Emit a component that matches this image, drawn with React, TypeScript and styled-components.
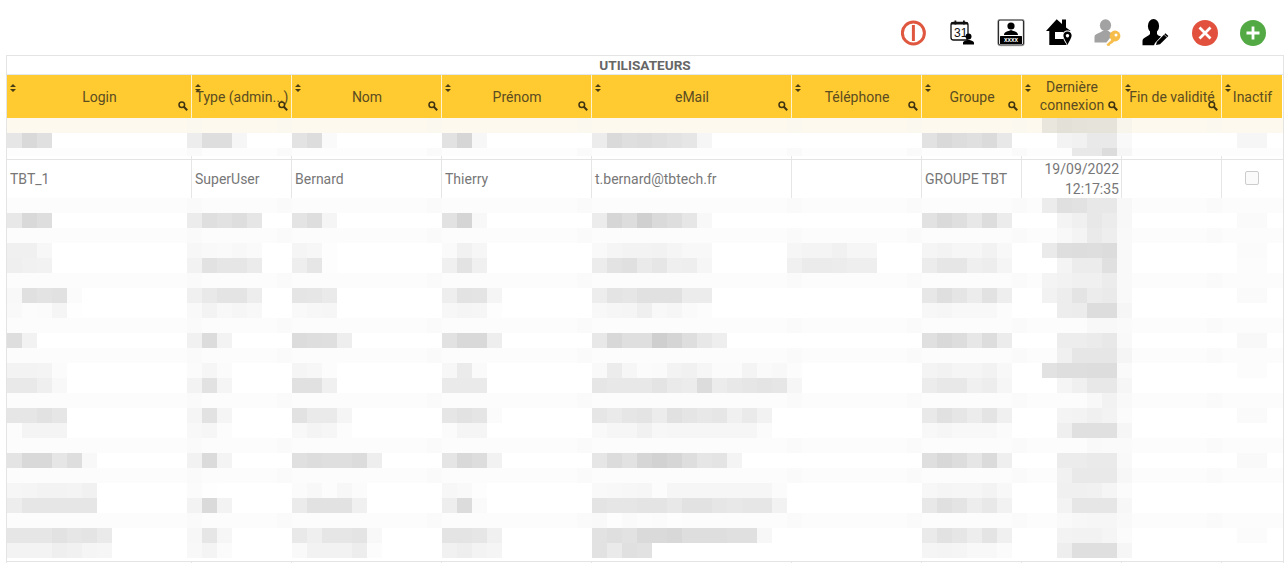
import { createGlobalStyle, styled } from "styled-components";

const COLUMNS = "185px 100px 150px 150px 200px 130px 100px 100px 100px 60px";

const GlobalStyle = createGlobalStyle`
  html, body {
    margin: 0;
    height: 563px;
    overflow: hidden;
    background: #fff;
    font-family: Roboto, "Liberation Sans", sans-serif;
  }
`;

const Toolbar = styled.div`
  display: flex;
  justify-content: flex-end;
  height: 55px;
  padding: 19px 9px 0 0;
  box-sizing: border-box;
`;

const ToolButton = styled.div`
  width: 48.3px;
  height: 28px;
  display: flex;
  justify-content: center;
`;

const Panel = styled.div`
  margin-left: 6px;
  width: 1276px;
  border: 1px solid #e4e4e4;
`;

const Title = styled.div`
  height: 18px;
  line-height: 19px;
  text-align: center;
  font-size: 13.6px;
  font-weight: 700;
  color: #666;
  border-bottom: 1px solid #e3e8ee;
`;

const Grid = styled.div`
  display: grid;
  grid-template-columns: ${COLUMNS};
`;

const HeadCell = styled.div`
  position: relative;
  height: 43px;
  box-sizing: border-box;
  padding-left: 1px;
  display: flex;
  align-items: center;
  justify-content: center;
  text-align: center;
  background: #ffcb30;
  border-right: 1px solid #fff3cf;
  color: #5b4c22;
  font-size: 14px;
  line-height: 18px;
  white-space: nowrap;

  &:last-child {
    border-right: 0;
  }
`;

const TwoLines = styled.span`
  padding-bottom: 2px;
`;

const SortMark = styled.svg`
  position: absolute;
  top: 9px;
  left: 3px;
  width: 6px;
  height: 8px;
`;

const SearchMark = styled.svg`
  position: absolute;
  right: 3px;
  bottom: 7px;
  width: 10px;
  height: 10px;
`;

const BodyCell = styled.div<{ $align?: string }>`
  height: 38px;
  display: flex;
  align-items: center;
  justify-content: ${(p) => p.$align ?? "flex-start"};
  padding: 0 ${(p) => (p.$align === "flex-end" ? "2px" : "3px")} 0 3px;
  box-sizing: border-box;
  overflow: hidden;
  border-right: 1px solid #e6e6e6;
  color: #777;
  font-size: 14px;
  line-height: 20px;
  text-align: ${(p) => (p.$align === "flex-end" ? "right" : "left")};

  &:last-child {
    border-right: 0;
  }
`;

const Tick = styled.div`
  height: 3px;
  border-right: 1px solid #e6e6e6;

  &:last-child {
    border-right: 0;
  }
`;

const RowLine = styled.div`
  height: 1px;
  background: #e4e4e4;
`;

const Check = styled.div`
  width: 12px;
  height: 12px;
  margin: -2px auto 0;
  border: 1px solid #ccc;
  border-radius: 2px;
  background: #fafafa;
`;

const MosaicLine = styled.div<{ $bg: string; $h: number }>`
  display: grid;
  grid-template-columns: repeat(85, 15px);
  height: ${(p) => p.$h}px;
  background: ${(p) => p.$bg};
`;

const Tile = styled.div`
  grid-row: 1;
  min-width: 0;
`;

type Run = [number, string];
type Line = { band?: boolean; runs: Run[] };

// column edges show through the blur on the pale bands
const EDGES = [12, 18, 28, 38, 52, 60, 67, 74, 80];

const upperLines: { h: number; bg: string; warm?: boolean; runs: Run[] }[] = [
  { h: 15, bg: "#fdf9ef", warm: true, runs: [[12, "fb"], [18, "fb"], [28, "fb"], [38, "fb"], [52, "fb"], [60, "fb"], [67, "fb"], [69, "e9e3e5e6e6"], [74, "f8"], [80, "fb"]] },
  { h: 15, bg: "#fff", runs: [[0, "e6d9e0"], [12, "eddedef6"], [19, "e3ddfa"], [29, "e2d6f7"], [39, "ecdadfdde0e3e6f6"], [61, "e2d9dde0dbe8"], [70, "f3f1e9e9f9"], [82, "f6f6"]] },
  { h: 8, bg: "#fdfdfd", runs: [[12, "fa"], [18, "fa"], [28, "fa"], [38, "fa"], [52, "fa"], [60, "fa"], [67, "fa"], [71, "e8e8dcf6"]] },
];

const lowerLines: Line[] = [
  { band: true, runs: [[69, "ece0e2e8e8f8"]] },
  { runs: [[0, "e8d9de"], [12, "ecdfe2dee6"], [19, "e4def5"], [29, "e2d5f8"], [39, "ecd6ddd0dadee6f8"], [61, "e2dadfe8ddec"], [70, "f4f0e8ecf8"], [82, "fafa"]] },
  { band: true, runs: [[70, "f8f4eaeef9"]] },
  { runs: [[0, "f0f0f7"], [12, "f7f9faf8fa"], [19, "f5f7fd"], [29, "faf1f6"], [39, "f9f5f3f3f2f5f8f8"], [52, "f6f4f4f1f6f6"], [61, "f5f3f6f6f2f8"], [69, "eadedddedcf9"], [82, "fbfb"]] },
  { runs: [[0, "eff1f2"], [12, "f2e2e6e6eb"], [19, "eee6fd"], [29, "f0e3f0"], [39, "ece3e0eae6efeef6"], [52, "f0ebebeceeee"], [61, "ece6e6efedf5"], [70, "f4ecece0f9"], [82, "fcfc"]] },
  { band: true, runs: [[69, "f4f2f0f0ecf9"]] },
  { runs: [[0, "f8e0e3e1fb"], [12, "f0e9e4e4ed"], [19, "e5e6ea"], [29, "eee3e4f5"], [39, "ede4e6e1e1e1ecec"], [61, "e7dfe5ece2ee"], [69, "f2ede4eceaf9"], [82, "fafa"]] },
  { runs: [[0, "f9fcfbf5fe"], [12, "f9f3f8f6f8"], [19, "f9f7f6"], [29, "f7f5f6fd"], [39, "f8f6f5eff8f6fafc"], [61, "f7f6f8f8f8fc"], [70, "edecddddf6"]] },
  { band: true, runs: [[72, "f8f8"]] },
  { runs: [[0, "def2"], [12, "f1dcf3"], [19, "dcdedfee"], [29, "e2d9d9ee"], [39, "e8d8dfdfcfd5dee8ee"], [61, "e0d9dde7ddec"], [70, "edede be8f9"], [82, "f8f8"]] },
  { band: true, runs: [[70, "f0e6e6e6f5"]] },
  { runs: [[0, "f3f3f4fb"], [12, "fbf6fb"], [19, "f5f7fc"], [29, "f7ebfa"], [39, "f9ecf6fbfaf3f1f6fbfbf4faf8fc"], [61, "f4f2f5f5f2f8"], [69, "e2dededdddfa"], [82, "fcfc"]] },
  { runs: [[0, "e9e9eff8"], [12, "f3e2f5"], [19, "e1e1f0"], [29, "eaeaea"], [39, "e6e8e8e8e4eaecdcece8e6e4e6f6"], [61, "ece8e8f0edf6"], [70, "f5f0e8e8f6"]] },
  { band: true, runs: [[71, "fcf8f2f9"]] },
  { runs: [[0, "e6e6e2e6"], [12, "f5e2f5"], [19, "e2eaeaf5"], [29, "e6e2e5fb"], [39, "e6eae6e4ece1e5e8e6f0eaf2"], [61, "e9e1e6ece4f0"], [70, "f4f3f0f3fb"], [82, "fafa"]] },
  { runs: [[0, "fcf4f4f4"], [12, "f8f6fc"], [19, "f8f4f6fc"], [29, "fbf5f5"], [39, "f9f6f6f1f7f6f6f6f6f6f6fb"], [61, "f8f6f8f8f8fb"], [70, "efe0e0e0f6"]] },
  { band: true, runs: [[72, "f9fa"]] },
  { runs: [[0, "e4d9d9e6def8"], [12, "f2dbf4"], [19, "e0dddfdfdcee"], [29, "e5d9ddf2"], [39, "e6dce2d6d2d6dee6e4f4"], [61, "dfd8dde6dbef"], [70, "ececeaeaf9"], [82, "f9f9"]] },
  { band: true, runs: [[70, "f1e9e9e9f7"]] },
  { runs: [[0, "f6f5f3f3f4f1"], [12, "fbfe"], [19, "fbf8fcf7fb"], [29, "f7f9fd"], [39, "f9f8f7f6fcf6f6f6f6f6f6f6fb"], [61, "f7f5f6f6f3f8"], [70, "f0f0f1f5fb"]] },
  { runs: [[0, "ede6e6e6e6e6"], [12, "f3daf3"], [19, "ebe2e2e2f0"], [29, "eedcfa"], [39, "e4e6e6e4e4e8e2e2e6e8e6e6f2"], [61, "e8e0e4ede8f2"], [70, "f3e6e6e6f7"]] },
  { band: true, runs: [[39, "f9fdfafcfbfd"], [70, "f9f7f6f6f9"]] },
  { runs: [[0, "e6e6e6e2e6e4ea"], [12, "f7e6f6"], [19, "e9efe6e6e4f8"], [29, "e4e4e6f0"], [39, "e2dfe2dadad8dededee0e0f7"], [61, "eae2e6ede4f0"], [70, "f3f2f2f5fb"], [82, "fbfb"]] },
  { runs: [[0, "f3f3f3eff1f5f6"], [12, "f8f4fb"], [19, "f9f2f2f2edfc"], [29, "f1eef3f5"], [39, "e2eae0e2"], [61, "f5f4f5f8f8fb"], [70, "eedfdfdff6"]] },
];

function shades(run: Run) {
  const hex = run[1].replace(/\s/g, "");
  const out: { k: number; v: number }[] = [];
  for (let i = 0; i < hex.length; i += 2) {
    out.push({ k: run[0] + i / 2, v: parseInt(hex.slice(i, i + 2), 16) });
  }
  return out;
}

function Mosaic({ runs, h, bg, warm }: { runs: Run[]; h: number; bg: string; warm?: boolean }) {
  const tiles = runs.flatMap(shades);
  return (
    <MosaicLine $bg={bg} $h={h}>
      {tiles.map(({ k, v }) => (
        <Tile
          key={k}
          style={{
            gridColumnStart: k + 1,
            background: warm ? `rgb(${v},${v - 3},${v - 12})` : `rgb(${v},${v},${v})`,
          }}
        />
      ))}
    </MosaicLine>
  );
}

function Ticks() {
  return (
    <Grid>
      {Array.from({ length: 10 }, (_, i) => (
        <Tick key={i} />
      ))}
    </Grid>
  );
}

const headers = [
  "Login",
  "Type (admin...)",
  "Nom",
  "Prénom",
  "eMail",
  "Téléphone",
  "Groupe",
  <TwoLines>Dernière<br />connexion</TwoLines>,
  "Fin de validité",
  "Inactif",
];

function Header({ label, search }: { label: React.ReactNode; search: boolean }) {
  return (
    <HeadCell>
      <SortMark viewBox="0 0 6 8">
        <path d="M3 0 L6 3 H0 Z M0 5 H6 L3 8 Z" fill="#4a3c14" />
      </SortMark>
      {label}
      {search && (
        <SearchMark viewBox="0 0 10 10">
          <circle cx="3.8" cy="3.8" r="2.8" fill="none" stroke="#3f3312" strokeWidth="1.5" />
          <path d="M5.8 5.8 L9.2 9.2" stroke="#3f3312" strokeWidth="2" />
        </SearchMark>
      )}
    </HeadCell>
  );
}

function PowerIcon() {
  return (
    <svg width="28" height="28" viewBox="1.6 0 28 28">
      <circle cx="14" cy="14" r="11" fill="none" stroke="#e0573f" strokeWidth="3" />
      <rect x="12.5" y="6" width="3" height="16" fill="#e0573f" />
    </svg>
  );
}

function CalendarIcon() {
  return (
    <svg width="28" height="28" viewBox="1 0 28 28">
      <rect x="3" y="3.5" width="17" height="17.5" rx="2.5" fill="#fff" stroke="#111" strokeWidth="1.3" />
      <rect x="3" y="3.5" width="17" height="2" fill="#111" />
      <rect x="6.5" y="1.5" width="1.8" height="4" fill="#111" />
      <rect x="15" y="1.5" width="1.8" height="4" fill="#111" />
      <text x="6" y="18" fontFamily="Liberation Sans" fontSize="12" fill="#111">31</text>
      <circle cx="20.5" cy="17.5" r="3" fill="#000" />
      <path d="M15 25.5 V24 C15 21.8 18 21.8 20.5 20.8 C23 21.8 26 21.8 26 24 V25.5 Z" fill="#000" />
    </svg>
  );
}

function BadgeIcon() {
  return (
    <svg width="28" height="28" viewBox="0 0 28 28">
      <rect x="1.5" y="1" width="25" height="25" rx="1.5" fill="#fff" stroke="#111" strokeWidth="1.2" />
      <rect x="0.8" y="0.3" width="26.4" height="26.4" rx="2" fill="none" stroke="#888" strokeWidth="0.8" />
      <circle cx="14" cy="7" r="3.6" fill="#000" />
      <path d="M7 16 C7 12.5 11 12.5 14 11 C17 12.5 21 12.5 21 16 Z" fill="#000" />
      <rect x="3" y="17" width="22" height="8" rx="0.5" fill="#000" />
      <text x="14" y="23.4" textAnchor="middle" fontFamily="Liberation Sans" fontSize="6.4" fontWeight="700" fill="#fff">xxxx</text>
    </svg>
  );
}

function HousePinIcon() {
  return (
    <svg width="28" height="28" viewBox="0 0 28 28">
      <path d="M10.7 0.3 L16 5 V0.5 H20 V8.5 L24.7 12 H21 V26 H3.3 V12 H0 Z M9 13 V20 H17 V13 Z" fillRule="evenodd" fill="#000" />
      <path d="M21.5 11.5 C18 11.5 16.4 14 16.4 16.6 C16.4 19.4 19.8 24 21.5 27.4 C23.2 24 26.6 19.4 26.6 16.6 C26.6 14 25 11.5 21.5 11.5 Z" fill="#fff" />
      <path d="M21.5 12.5 C18.8 12.5 17.4 14.5 17.4 16.6 C17.4 19 20.2 23 21.5 26 C22.8 23 25.6 19 25.6 16.6 C25.6 14.5 24.2 12.5 21.5 12.5 Z M21.5 15 A1.7 1.7 0 1 1 21.49 15 Z" fillRule="evenodd" fill="#000" />
    </svg>
  );
}

function UserKeyIcon() {
  return (
    <svg width="28" height="28" viewBox="0 0 28 28">
      <ellipse cx="11.5" cy="6.2" rx="5.6" ry="6" fill="#a2a2a2" />
      <path d="M0.5 23.5 V18 C0.5 14.5 5.5 14.5 8.5 12 H14.5 C16 13.5 17.5 14 19 15 L12.5 23.5 Z" fill="#a2a2a2" />
      <circle cx="21" cy="17" r="5.4" fill="#f6bd4a" />
      <circle cx="22" cy="16" r="1.5" fill="#fff" />
      <path d="M18 20.4 L12.5 25.6 L13.8 27 L16 26.6 L16.4 25 L18 24.6 L21 21.4 Z" fill="#f6bd4a" />
    </svg>
  );
}

function UserPenIcon() {
  return (
    <svg width="28" height="28" viewBox="0 0 28 28">
      <ellipse cx="11.5" cy="7" rx="5.6" ry="7" fill="#000" />
      <path d="M0.5 26.3 V22 C0.5 18.5 6 18 8 15 V12 H15 V15 C16 16.5 17.5 17 19 17.5 L13 24 L12 26.3 Z" fill="#000" />
      <path d="M14 26 L14.8 23 L23.4 14.2 L26.4 17 L18 25.2 Z" fill="#000" />
      <path d="M22 15.4 L25.2 18.4" stroke="#fff" strokeWidth="0.7" />
    </svg>
  );
}

function CloseIcon() {
  return (
    <svg width="28" height="28" viewBox="0 0 28 28">
      <circle cx="14" cy="14" r="13" fill="#e2513e" />
      <path d="M8.5 8.5 L19.5 19.5 M19.5 8.5 L8.5 19.5" stroke="#fff" strokeWidth="2.8" />
    </svg>
  );
}

function AddIcon() {
  return (
    <svg width="28" height="28" viewBox="0 0 28 28">
      <circle cx="14" cy="14" r="13" fill="#53a944" />
      <path d="M14 7.5 V20.5 M7.5 14 H20.5" stroke="#fff" strokeWidth="2.8" />
    </svg>
  );
}

const tools = [PowerIcon, CalendarIcon, BadgeIcon, HousePinIcon, UserKeyIcon, UserPenIcon, CloseIcon, AddIcon];

export default function App() {
  return (
    <>
      <GlobalStyle />
      <Toolbar>
        {tools.map((Icon, i) => (
          <ToolButton key={i}>
            <Icon />
          </ToolButton>
        ))}
      </Toolbar>
      <Panel>
        <Title>UTILISATEURS</Title>
        <Grid>
          {headers.map((label, i) => (
            <Header key={i} label={label} search={i < 9} />
          ))}
        </Grid>
        {upperLines.map((line, i) => (
          <Mosaic key={i} runs={line.runs} h={line.h} bg={line.bg} warm={line.warm} />
        ))}
        <Ticks />
        <RowLine />
        <Grid>
          <BodyCell>TBT_1</BodyCell>
          <BodyCell>SuperUser</BodyCell>
          <BodyCell>Bernard</BodyCell>
          <BodyCell>Thierry</BodyCell>
          <BodyCell>t.bernard@tbtech.fr</BodyCell>
          <BodyCell />
          <BodyCell>GROUPE TBT</BodyCell>
          <BodyCell $align="flex-end">19/09/2022<br />12:17:35</BodyCell>
          <BodyCell />
          <BodyCell>
            <Check />
          </BodyCell>
        </Grid>
        {lowerLines.map((line, i) => (
          <Mosaic
            key={i}
            h={15}
            bg={line.band ? "#fcfcfc" : "#fff"}
            runs={line.band ? [...EDGES.map((k): Run => [k, "fa"]), ...line.runs] : line.runs}
          />
        ))}
        <MosaicLine $bg="#fff" $h={3} />
        <RowLine />
        <Ticks />
      </Panel>
    </>
  );
}
